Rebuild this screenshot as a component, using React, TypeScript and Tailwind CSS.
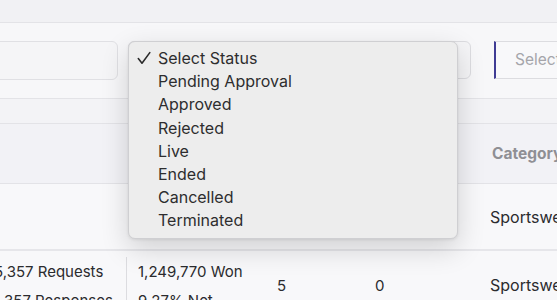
const statuses = [
  "Select Status",
  "Pending Approval",
  "Approved",
  "Rejected",
  "Live",
  "Ended",
  "Cancelled",
  "Terminated",
];

function Check() {
  return (
    <svg width="14" height="14" viewBox="0 0 14 14" fill="none" className="shrink-0">
      <path d="M1.3 7.6 L5 12.2 L12.8 1.6" stroke="#2a2a2a" strokeWidth="1.6" strokeLinecap="round" strokeLinejoin="round" />
    </svg>
  );
}

export default function App() {
  return (
    <div
      className="relative h-[300px] w-[557px] overflow-hidden bg-[#f7f7f9] text-[#2b2b2e]"
      style={{ fontFamily: "Inter, 'Noto Sans', sans-serif" }}
    >
      <div className="h-[23px] border-b border-[#e3e3e7] bg-[#f1f1f4]" />

      {/* filters */}
      <div className="flex h-[76px] items-start gap-[10px] border-b border-[#e3e3e7] bg-[#f7f7f9] pt-[18px]">
        <div className="-ml-[40px] h-[39px] w-[158px] shrink-0 rounded-[6px] border border-[#e0e0e4] bg-[#f5f5f7]" />
        <div className="h-[38px] w-[343px] shrink-0 rounded-[6px] border border-[#dcdce0] bg-[#f5f5f7]" />
        <div className="ml-[13px] flex h-[38px] w-[120px] shrink-0 items-center rounded-r-[4px] border border-l-2 border-[#dcdce0] border-l-[#3f3b94] bg-[#f8f8fa] pl-[19px] text-[15.5px] text-[#a5a5aa]">
          Select
        </div>
      </div>

      <div className="h-[25px] border-b border-[#e3e3e7] bg-[#f3f3f6]" />

      {/* header */}
      <div className="flex h-[60px] items-center border-b border-[#e3e3e7] bg-[#f2f2f6]">
        <div className="w-[478px] shrink-0" />
        <div className="h-[15px] w-px bg-[#d2d2d7]" />
        <div className="whitespace-nowrap pl-[14px] text-[15.5px] font-bold text-[#8f8f94]">Category</div>
      </div>

      {/* row 1 */}
      <div className="flex h-[67px] items-center border-b-2 border-[#e6e6ea] bg-[#f8f8fa]">
        <div className="w-[490px] shrink-0" />
        <div className="whitespace-nowrap text-[16px]">Sportswear</div>
      </div>

      {/* row 2 */}
      <div className="flex bg-[#f8f8fa] text-[15px]">
        <div className="-ml-[6px] w-[132px] shrink-0 whitespace-nowrap pt-[11px] leading-[19px]">
          <div>5,357 Requests</div>
          <div className="mt-[10px]">1,357 Responses</div>
        </div>
        <div className="mt-[6px] w-[151px] shrink-0 whitespace-nowrap border-l border-[#dcdce0] pl-[11px] pt-[5px] leading-[19px]">
          <div>1,249,770 Won</div>
          <div className="mt-[10px]">9.27% Net</div>
        </div>
        <div className="w-[98px] shrink-0 pt-[25px] leading-[19px]">5</div>
        <div className="w-[115px] shrink-0 pt-[25px] leading-[19px]">0</div>
        <div className="whitespace-nowrap pt-[25px] text-[16px] leading-[19px]">Sportswear</div>
      </div>

      {/* native status menu */}
      <div className="absolute left-[128px] top-[41px] w-[330px] rounded-[7px] border border-[#cfcfd2] bg-[#ededed] pb-[6px] pt-[4.5px] shadow-[0_10px_28px_rgba(0,0,0,0.16),0_1px_3px_rgba(0,0,0,0.08)]">
        {statuses.map((s, i) => (
          <div key={s} className="flex h-[23.15px] items-center text-[16px] text-[#2d2d2f]">
            <div className="flex w-[29px] shrink-0 justify-end pr-[7px]">{i === 0 && <Check />}</div>
            <span>{s}</span>
          </div>
        ))}
      </div>
    </div>
  );
}
